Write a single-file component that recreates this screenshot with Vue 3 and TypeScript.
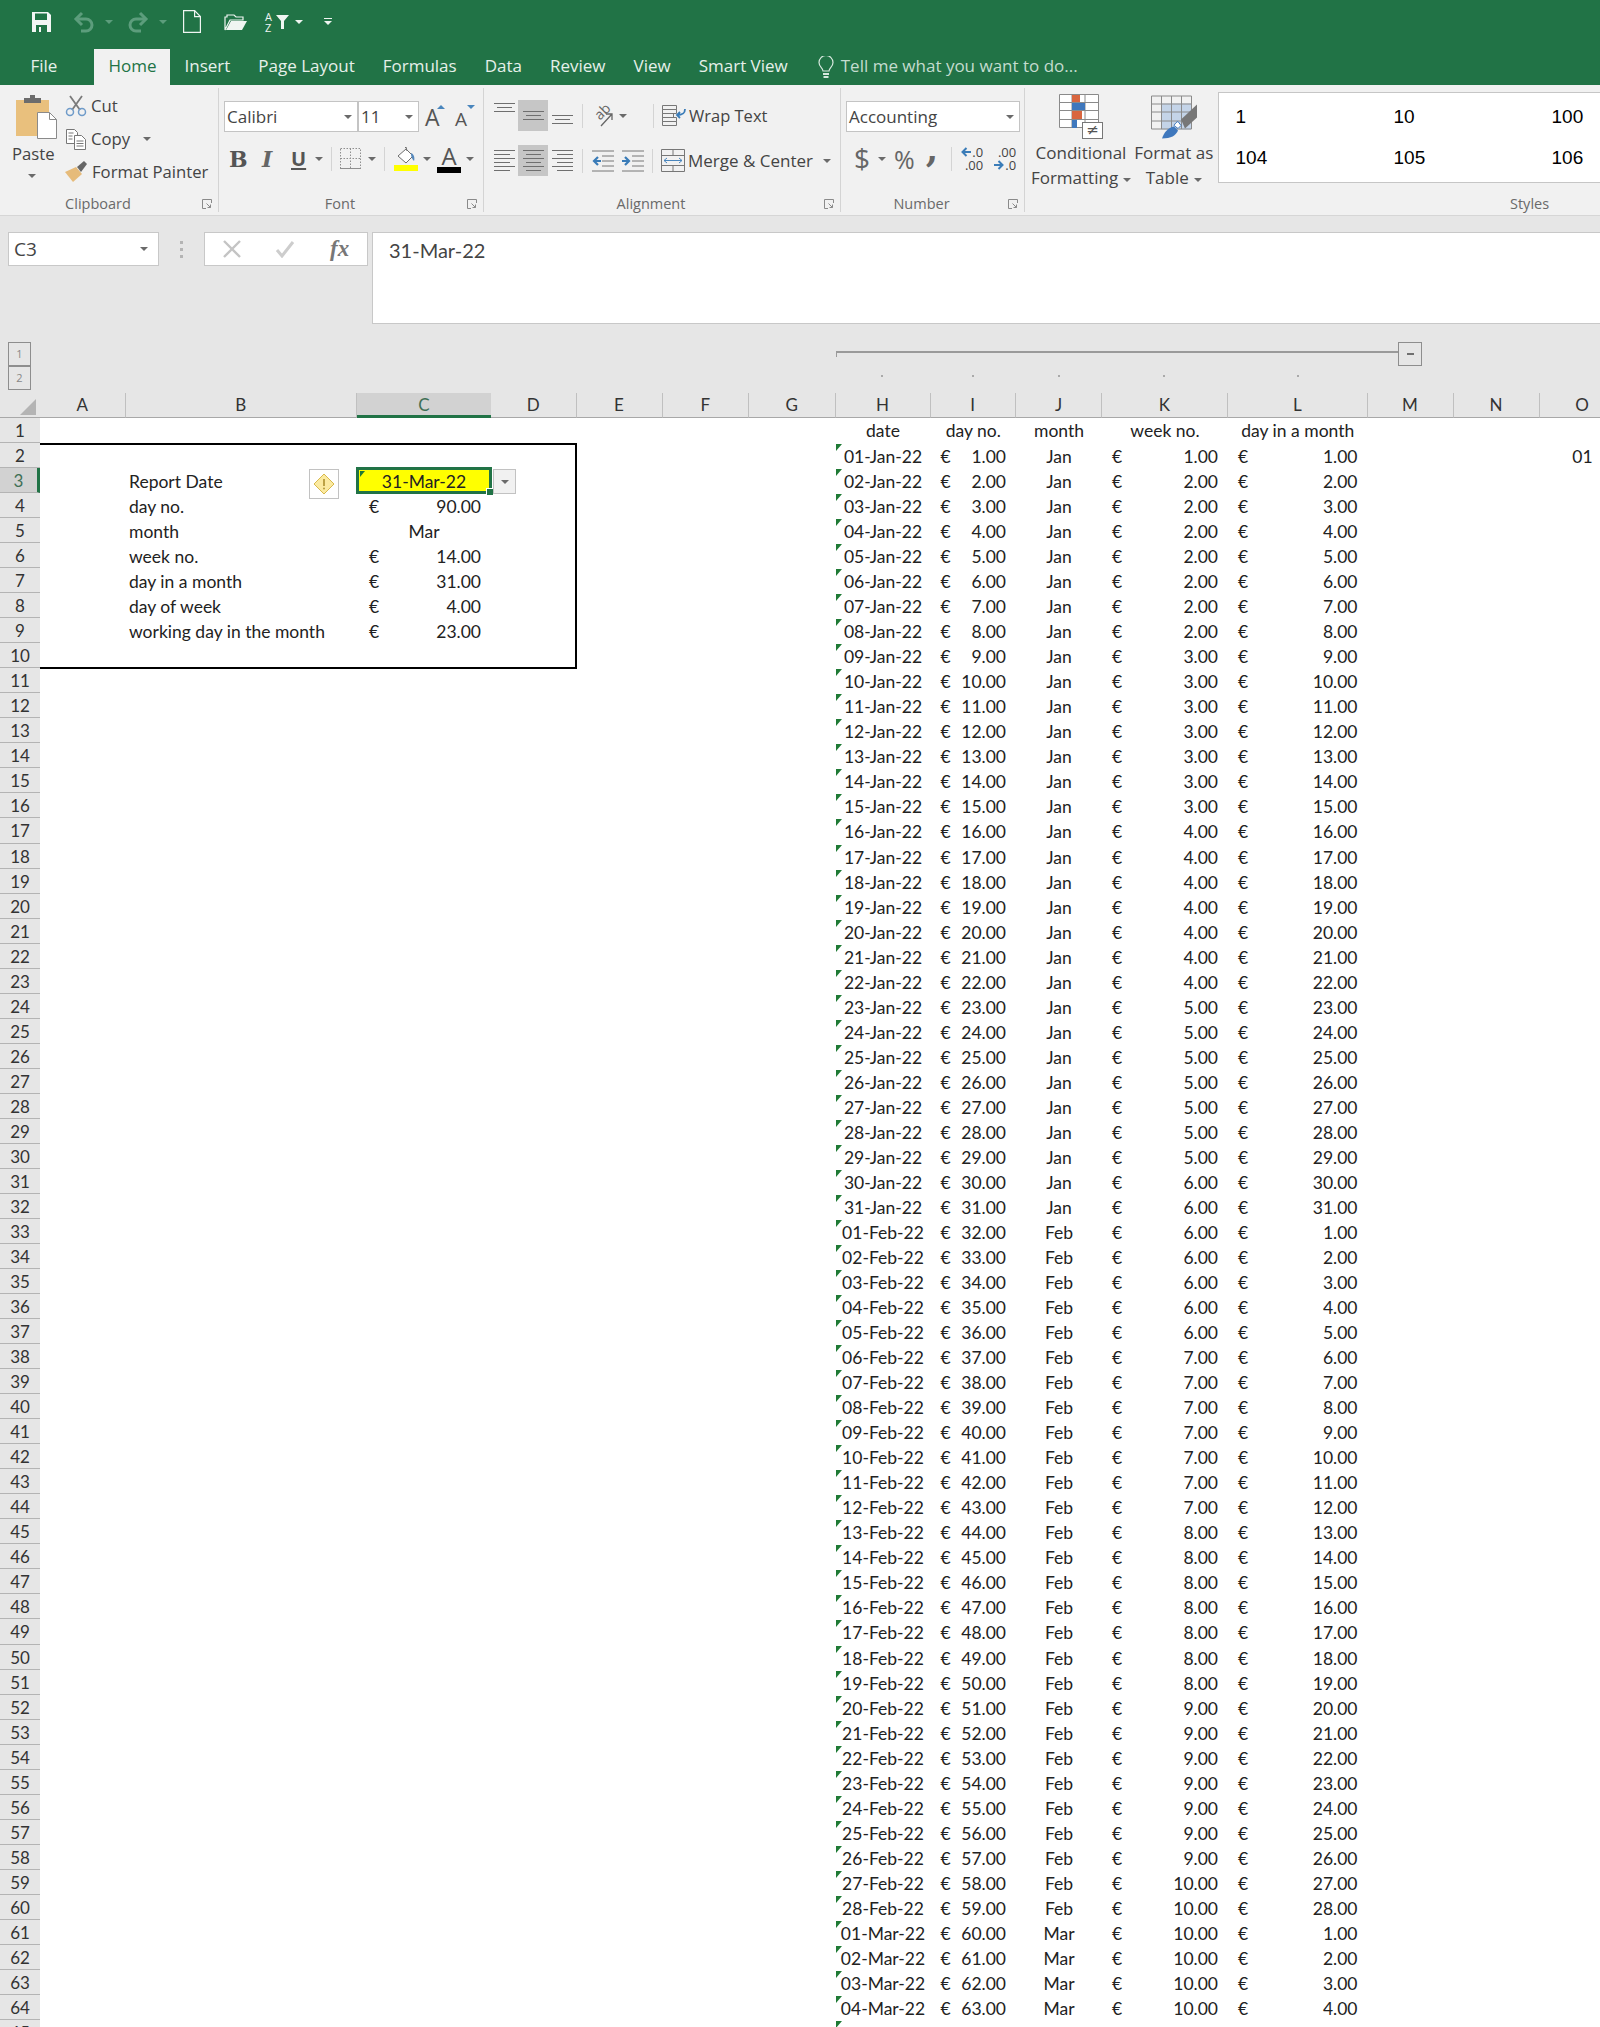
<template>
  <div class="app">
    <!-- title bar -->
    <div class="titlebar">
      <div class="qat">
        <svg class="q-save" width="19" height="20" viewBox="0 0 19 20"><path d="M0 0h16l3 3v17H0z" fill="#f3f6f4"/><rect x="3" y="1.500" width="12" height="6.500" fill="#217346"/><rect x="4" y="13" width="11" height="7" fill="#217346"/><rect x="7" y="15" width="2" height="5" fill="#f3f6f4"/></svg>
        <svg class="q-undo" width="22" height="22" viewBox="0 0 22 22" fill="none" stroke="#5c9d7c" stroke-width="3"><path d="M9 2 3 8l6 6"/><path d="M3 8h10a6 6 0 0 1 0 12H8"/></svg>
        <span class="q-caret dim"></span>
        <svg class="q-redo" width="22" height="22" viewBox="0 0 22 22" fill="none" stroke="#5c9d7c" stroke-width="3"><path d="m13 2 6 6-6 6"/><path d="M19 8H9a6 6 0 0 0 0 12h5"/></svg>
        <span class="q-caret dim"></span>
        <svg class="q-new" width="18" height="23" viewBox="0 0 18 23" fill="none" stroke="#f0f5f2" stroke-width="1.200"><path d="M.6.600h11l5.800 6v15.800H.6z"/><path d="M11.600.6v6h5.800"/></svg>
        <svg class="q-open" width="24" height="19" viewBox="0 0 24 19"><path d="M1 18V5h2V3h7l2 2h7v3H6L1 18z" fill="none" stroke="#f0f5f2" stroke-width="1.200"/><path d="M2 18 7 9h16l-5 9z" fill="#f0f5f2"/></svg>
        <div class="q-sort"><span>A</span><span>Z</span></div>
        <svg class="q-funnel" width="13" height="14" viewBox="0 0 13 14"><path d="M0 0h13L8 6v8H5V6z" fill="#f0f5f2"/></svg>
        <span class="q-caret"></span>
        <div class="q-custom"><i></i><span class="q-caret"></span></div>
      </div>
      <div class="tabs">
        <div v-for="t in tabs" :key="t" class="tab" :class="{ on: t === 'Home', file: t === 'File' }">{{ t }}</div>
        <svg class="bulb" width="16" height="22" viewBox="0 0 16 22" fill="none" stroke="#d7e8de" stroke-width="1.200"><path d="M5 15c0-3-4-4-4-8.500a7 7 0 0 1 14 0C15 11 11 12 11 15z"/><path d="M5 18h6M5.500 21h5" stroke-width="2"/></svg>
        <div class="tell">Tell me what you want to do...</div>
      </div>
    </div>

    <!-- ribbon -->
    <div class="ribbon">
      <section class="group g-clip">
        <div class="body clip-body">
          <div class="paste">
            <svg width="41" height="44" viewBox="0 0 41 44"><rect y="5" width="33" height="36" fill="#e9c07d"/><path d="M8 8V3h6V0h5v3h6v5z" fill="#6c6c6c"/><path d="M21.500 17.500h12l7 7v19h-19z" fill="#fff" stroke="#8a8a8a"/><path d="M33.500 17.500v7h7" fill="none" stroke="#8a8a8a"/></svg>
            <span class="paste-l">Paste</span>
            <span class="caret"></span>
          </div>
          <div class="clip-list">
            <div class="clip-row">
              <svg width="22" height="22" viewBox="0 0 22 22" fill="none"><path d="M5 1l10 14M17 1 7 15" stroke="#7a7a7a" stroke-width="1.800"/><circle cx="5" cy="17" r="3.500" stroke="#6f9bc9" stroke-width="1.500"/><circle cx="17" cy="17" r="3.500" stroke="#6f9bc9" stroke-width="1.500"/></svg>
              <span>Cut</span>
            </div>
            <div class="clip-row">
              <svg width="22" height="22" viewBox="0 0 22 22" fill="#fff" stroke="#777"><path d="M1.500 1.500h8l3 3v11h-11z"/><path d="M9.500 7.500h7l4 4v10h-11z"/><path d="M3.500 5h5M3.500 8h4M3.500 11h4M11.500 13h7M11.500 15.500h7M11.500 18h7" fill="none"/></svg>
              <span>Copy</span><span class="caret cp"></span>
            </div>
            <div class="clip-row">
              <svg width="23" height="22" viewBox="0 0 23 22"><path d="M0 11 11 6l6 7-9 8z" fill="#e6bb7a"/><path d="m12 6 7-6 3 3-6 8z" fill="#666"/></svg>
              <span>Format Painter</span>
            </div>
          </div>
        </div>
        <div class="label">Clipboard<svg class="launch" width="10" height="10" viewBox="0 0 10 10" fill="none" stroke="#8a8a8a"><path d="M9.500 4V.5H.5v9H4"/><path d="m4.500 4.500 4 4M8.500 5.500v3h-3"/></svg></div>
      </section>

      <section class="group g-font">
        <div class="body rows">
          <div class="r1">
            <div class="combo c-font">Calibri<span class="caret"></span></div>
            <div class="combo c-size">11<span class="caret"></span></div>
            <div class="grow"><span class="big-a">A</span><i class="tri-up"></i></div>
            <div class="shrink"><span class="small-a">A</span><i class="tri-dn"></i></div>
          </div>
          <div class="r2 font-tools">
            <span class="t-b">B</span>
            <span class="t-i">I</span>
            <span class="t-u">U</span><span class="caret"></span>
            <i class="vsep"></i>
            <svg width="21" height="21" viewBox="0 0 21 21" fill="none" stroke="#8f8f8f" stroke-dasharray="1.500 1.500"><path d="M.5.500h20v20H.5zM10.500.5v20M.5 10.500h20"/><path d="M0 20.500h21" stroke-dasharray="none"/></svg>
            <span class="caret"></span>
            <i class="vsep"></i>
            <div class="fill">
              <svg width="24" height="18" viewBox="0 0 24 18"><path d="m4 9 8-7 7 7-7 7z" fill="#fff" stroke="#6d6d6d"/><path d="M11 1l1-1 1 4" fill="none" stroke="#6d6d6d"/><path d="M17 6c3 1 4 5 3 8-2-2-3-4-3-8z" fill="#5588bb"/></svg>
              <i class="bar yellow"></i>
            </div>
            <span class="caret"></span>
            <div class="fcolor"><span>A</span><i class="bar black"></i></div>
            <span class="caret"></span>
          </div>
        </div>
        <div class="label">Font<svg class="launch" width="10" height="10" viewBox="0 0 10 10" fill="none" stroke="#8a8a8a"><path d="M9.500 4V.5H.5v9H4"/><path d="m4.500 4.500 4 4M8.500 5.500v3h-3"/></svg></div>
      </section>

      <section class="group g-align">
        <div class="body align-body">
          <div class="al-row">
            <div class="al-ic up"><svg width="21" height="12" viewBox="0 0 21 12" stroke="#6f6f6f"><path d="M0 1.500h21M3 5.500h15M0 9.500h21"/></svg></div>
            <div class="al-ic hi"><svg width="21" height="12" viewBox="0 0 21 12" stroke="#6f6f6f"><path d="M0 1.500h21M3 5.500h15M0 9.500h21"/></svg></div>
            <div class="al-ic low"><svg width="21" height="12" viewBox="0 0 21 12" stroke="#6f6f6f"><path d="M0 1.500h21M3 5.500h15M0 9.500h21"/></svg></div>
            <i class="vsep"></i>
            <svg class="orient" width="20" height="24" viewBox="0 0 20 24"><text x="1" y="13" transform="rotate(-45 8 9)" class="ab">ab</text><path d="M7 22 18 10M12 10h6v6" fill="none" stroke="#666" stroke-width="1.300"/></svg>
            <span class="caret"></span>
            <i class="vsep wide"></i>
            <svg class="wrap-i" width="24" height="22" viewBox="0 0 24 22" fill="none" stroke="#777"><path d="M.5.500h14v4H.5zM.5 4.500h14v4H.5zM.5 8.500h11v4H.5zM.5 12.500h14v4H.5zM.5 16.500h14v4H.5z"/><path d="M23 4c0 5-3 6-8 6m3-3-3 3 3 3" stroke="#3a7cb8" stroke-width="1.800"/></svg>
            <span class="al-text wrap-t">Wrap Text</span>
          </div>
          <div class="al-row">
            <div class="al-ic"><svg width="21" height="21" viewBox="0 0 21 21" stroke="#6f6f6f"><path d="M0 .5h21M0 4.500h16M0 8.500h21M0 12.500h16M0 16.500h21M0 20.500h16"/></svg></div>
            <div class="al-ic hi"><svg width="21" height="21" viewBox="0 0 21 21" stroke="#6f6f6f"><path d="M0 .5h21M3 4.500h15M0 8.500h21M3 12.500h15M0 16.500h21M3 20.500h15"/></svg></div>
            <div class="al-ic"><svg width="21" height="21" viewBox="0 0 21 21" stroke="#6f6f6f"><path d="M0 .5h21M5 4.500h16M0 8.500h21M5 12.500h16M0 16.500h21M5 20.500h16"/></svg></div>
            <i class="vsep"></i>
            <svg class="ind1" width="22" height="22" viewBox="0 0 22 22" fill="none"><path d="M0 1h22M10 6h12M10 11h12M10 16h12M0 21h22" stroke="#777"/><path d="M9 11H2m4-4-4 4 4 4" stroke="#3a7cb8" stroke-width="2.200"/></svg>
            <svg class="ind2" width="22" height="22" viewBox="0 0 22 22" fill="none"><path d="M0 1h22M10 6h12M10 11h12M10 16h12M0 21h22" stroke="#777"/><path d="M0 11h7M3 7l4 4-4 4" stroke="#3a7cb8" stroke-width="2.200"/></svg>
            <i class="vsep wide2"></i>
            <svg class="merge-i" width="24" height="23" viewBox="0 0 24 23" fill="none" stroke="#777"><path d="M.5.500h23v22H.5zM.5 6.500h23M.5 16.500h23M12 .5v6M12 16.500v6"/><path d="M3 11.500h18M6 9l-3 2.500L6 14M18 9l3 2.500-3 2.500" stroke="#4a86bd"/></svg>
            <span class="al-text merge-t">Merge &amp; Center</span>
            <span class="caret mc"></span>
          </div>
        </div>
        <div class="label">Alignment<svg class="launch" width="10" height="10" viewBox="0 0 10 10" fill="none" stroke="#8a8a8a"><path d="M9.500 4V.5H.5v9H4"/><path d="m4.500 4.500 4 4M8.500 5.500v3h-3"/></svg></div>
      </section>

      <section class="group g-num">
        <div class="body rows">
          <div class="r1"><div class="combo c-num">Accounting<span class="caret"></span></div></div>
          <div class="r2 num-tools">
            <span class="n-dollar">$</span><span class="caret"></span>
            <span class="n-pct">%</span>
            <span class="n-comma">,</span>
            <i class="vsep"></i>
            <div class="dec d1"><div><svg width="10" height="10" viewBox="0 0 10 10" fill="none" stroke="#3a7cb8" stroke-width="2"><path d="M10 5H2m3.500-4L1.500 5l4 4"/></svg><span>.0</span></div><div class="ra"><span>.00</span></div></div>
            <div class="dec d2"><div class="ra"><span>.00</span></div><div class="ra"><svg width="10" height="10" viewBox="0 0 10 10" fill="none" stroke="#3a7cb8" stroke-width="2"><path d="M0 5h8M4.500 1l4 4-4 4"/></svg><span>.0</span></div></div>
          </div>
        </div>
        <div class="label">Number<svg class="launch" width="10" height="10" viewBox="0 0 10 10" fill="none" stroke="#8a8a8a"><path d="M9.500 4V.5H.5v9H4"/><path d="m4.500 4.500 4 4M8.500 5.500v3h-3"/></svg></div>
      </section>

      <section class="group g-styles">
        <div class="body styles-body">
          <div class="bigbtn cond">
            <svg width="44" height="46" viewBox="0 0 44 46">
              <path d="M.5.500h39v33H.5zM.5 8.500h39M.5 16.500h39M.5 25.500h39M13 .5v33M26 .5v33" fill="#fff" stroke="#8a8a8a"/>
              <rect x="13" y="1" width="8" height="7" fill="#d9663f"/><rect x="13" y="9" width="13" height="7" fill="#3f78bd"/><rect x="13" y="17" width="10" height="8" fill="#d9663f"/><rect x="13" y="26" width="5" height="8" fill="#3f78bd"/>
              <rect x="23.500" y="28.500" width="20" height="16" fill="#fff" stroke="#777"/><text x="33.500" y="41" text-anchor="middle" class="ne">≠</text>
            </svg>
            <span>Conditional</span>
            <span>Formatting<i class="caret"></i></span>
          </div>
          <div class="bigbtn fmt">
            <svg width="46" height="43" viewBox="0 0 46 43">
              <rect x="10" y="8" width="30" height="26" fill="#c4d4e8"/>
              <path d="M.5.500h40v33H.5zM.5 8.500h40M.5 16.500h40M.5 25.500h40M10.500.5v33M20.500.5v33M30.500.5v33" fill="none" stroke="#8a8a8a"/>
              <path d="M11 43c2-6 6-11 12-12l4 4c-2 5-7 8-16 8z" fill="#3f78bd"/><path d="M23 30c1-2 3-4 4-4l3 4-3 3z" fill="#fff" stroke="#3f78bd"/>
              <path d="m30 24 16-15v13L34 33z" fill="#777"/>
            </svg>
            <span>Format as</span>
            <span>Table<i class="caret"></i></span>
          </div>
          <div class="gallery">
            <span v-for="g in gallery" :key="g">{{ g }}</span>
          </div>
        </div>
        <div class="label styles-l">Styles</div>
      </section>
    </div>

    <!-- formula bar area -->
    <div class="formula-area">
      <div class="fx-line">
        <div class="namebox">C3<span class="caret"></span></div>
        <div class="grip"><i></i><i></i><i></i></div>
        <div class="fxbtns">
          <svg width="18" height="18" viewBox="0 0 18 18" stroke="#c4c4c4" stroke-width="2.400"><path d="m1 1 16 16M17 1 1 17"/></svg>
          <svg width="20" height="18" viewBox="0 0 20 18" fill="none" stroke="#cdcdcd" stroke-width="3"><path d="m2 10 5 6L18 2"/></svg>
          <span class="fx">fx</span>
        </div>
        <div class="finput">31-Mar-22</div>
      </div>
      <div class="outline-row">
        <div class="outline-levels"><div>1</div><div>2</div></div>
        <div class="outline-track">
          <div class="o-line"></div>
          <div class="o-btn"><i></i></div>
        </div>
      </div>
      <div class="dots"><i></i><i></i><i></i><i></i><i></i></div>
    </div>

    <!-- sheet -->
    <div class="sheet">
      <div class="corner"><i></i></div>
      <div v-for="c in columns" :key="c" class="ch" :class="{ active: c === 'C' }">{{ c }}</div>
      <template v-for="row in rows" :key="row.n">
        <div class="rh" :class="{ active: row.n === 3 }">{{ row.n }}</div>
        <div v-for="(cell, i) in row.cells" :key="i" class="cell" :class="cell.cls">
          <span v-if="cell.euro">€</span><span>{{ cell.text }}</span>
        </div>
      </template>
      <div class="frame"></div>
      <div class="warn">
        <svg width="22" height="22" viewBox="0 0 22 22"><path d="M11 1 21 11 11 21 1 11z" fill="#fbeaa0" stroke="#d8b94c"/><path d="M11 6v7" stroke="#b59a3a" stroke-width="1.800"/><circle cx="11" cy="15.500" r="1" fill="#b59a3a"/></svg>
      </div>
      <div class="drop"><span class="caret"></span></div>
    </div>
  </div>
</template>

<script setup lang="ts">
interface Cell {
  text: string
  cls: string
  euro?: boolean
}

interface Row {
  n: number
  cells: Cell[]
}

const tabs = ['File', 'Home', 'Insert', 'Page Layout', 'Formulas', 'Data', 'Review', 'View', 'Smart View']
const gallery = ['1', '10', '100', '104', '105', '106']
const columns = 'ABCDEFGHIJKLMNO'.split('')

const months = [
  { name: 'Jan', days: 31 },
  { name: 'Feb', days: 28 },
  { name: 'Mar', days: 31 },
]

// one entry per day from 1 Jan, as in columns H to L
const days: { date: string; no: number; month: string; week: number; dom: number }[] = []
months.forEach((m) => {
  for (let d = 1; d <= m.days; d++) {
    const no = days.length + 1
    days.push({
      date: `${String(d).padStart(2, '0')}-${m.name}-22`,
      no,
      month: m.name,
      week: Math.ceil((no - 1) / 7) + 1,
      dom: d,
    })
  }
})

const report: Record<number, [string, Cell]> = {
  3: ['Report Date', { text: '31-Mar-22', cls: 'ctr sel' }],
  4: ['day no.', { text: '90.00', cls: 'acct c', euro: true }],
  5: ['month', { text: 'Mar', cls: 'ctr' }],
  6: ['week no.', { text: '14.00', cls: 'acct c', euro: true }],
  7: ['day in a month', { text: '31.00', cls: 'acct c', euro: true }],
  8: ['day of week', { text: '4.00', cls: 'acct c', euro: true }],
  9: ['working day in the month', { text: '23.00', cls: 'acct c', euro: true }],
}

const blank = (): Cell => ({ text: '', cls: '' })
const money = (v: number, cls: string): Cell => ({ text: v.toFixed(2), cls: `acct ${cls}`, euro: true })

const buildRow = (n: number): Row => {
  const r = report[n]
  const cells: Cell[] = [blank(), r ? { text: r[0], cls: 'lbl' } : blank(), r ? r[1] : blank(), blank(), blank(), blank(), blank()]
  if (n === 1) {
    ;['date', 'day no.', 'month', 'week no.', 'day in a month'].forEach((t) => cells.push({ text: t, cls: 'ctr hd' }))
  } else if (n === 65) {
    cells.push({ text: '', cls: 'note' }, blank(), blank(), blank(), blank())
  } else {
    const d = days[n - 2]
    cells.push(
      { text: d.date, cls: 'ctr note' },
      money(d.no, 'i'),
      { text: d.month, cls: 'ctr' },
      money(d.week, 'k'),
      money(d.dom, 'l'),
    )
  }
  cells.push(blank(), blank(), n === 2 ? { text: '01', cls: 'ctr' } : blank())
  return { n, cells }
}

const rows: Row[] = Array.from({ length: 65 }, (_, i) => buildRow(i + 1))
</script>

<style>
html,
body {
  margin: 0;
  background: #fff;
}
</style>

<style scoped>
.app {
  width: 1600px;
  height: 2027px;
  overflow: hidden;
  background: #fff;
  font-family: "Open Sans", "Noto Sans", sans-serif;
  color: #444;
}

i {
  display: block;
}

.caret {
  display: inline-block;
  width: 0;
  height: 0;
  border-left: 4px solid transparent;
  border-right: 4px solid transparent;
  border-top: 4px solid #6a6a6a;
  flex: none;
}

/* title bar */
.titlebar {
  height: 85px;
  background: #217346;
}

.qat {
  height: 49px;
  display: flex;
  align-items: center;
  padding-left: 32px;
  box-sizing: border-box;
  padding-bottom: 6px;
}

.q-caret {
  width: 0;
  height: 0;
  border-left: 4px solid transparent;
  border-right: 4px solid transparent;
  border-top: 4px solid #eef4f0;
}

.q-caret.dim {
  border-top-color: #5c9d7c;
  margin-left: 10px;
}

.q-undo {
  margin-left: 22px;
}

.q-redo {
  margin-left: 14px;
}

.q-new {
  margin-left: 16px;
}

.q-open {
  margin-left: 23px;
}

.q-sort {
  margin-left: 17px;
  display: flex;
  flex-direction: column;
  font-size: 11px;
  line-height: 11px;
  color: #f0f5f2;
  width: 11px;
}

.q-funnel {
  margin-right: 6px;
}

.q-custom {
  margin-left: 21px;
  display: flex;
  flex-direction: column;
  gap: 2px;
  width: 8px;
}

.q-custom i {
  height: 1px;
  background: #eef4f0;
}

.tabs {
  height: 36px;
  display: flex;
  align-items: stretch;
  padding-left: 16.500px;
  color: #e6f0ea;
  font-size: 17px;
}

.tab {
  padding: 0 14px;
  line-height: 34px;
}

.tab.file {
  margin-right: 23px;
}

.tab.on {
  background: #f1f1f1;
  color: #217346;
}

.bulb {
  align-self: center;
  margin-left: 16px;
}

.tell {
  line-height: 34px;
  margin-left: 7px;
  color: #c4dccf;
}

/* ribbon */
.ribbon {
  height: 130px;
  box-sizing: content-box;
  display: flex;
  background: #f1f1f1;
  border-bottom: 1px solid #d6d6d6;
  font-size: 16.700px;
}

.group {
  box-sizing: border-box;
  margin: 3px 0 4px;
  height: 124px;
  display: flex;
  flex-direction: column;
  flex: none;
  border-right: 1px solid #d4d4d4;
}

.body {
  flex: 1;
  min-height: 0;
}

.label {
  position: relative;
  box-sizing: border-box;
  height: 24px;
  line-height: 32px;
  padding-right: 22px;
  text-align: center;
  font-size: 14.500px;
  color: #6a6a6a;
  flex: none;
}

.launch {
  position: absolute;
  right: 6px;
  top: 11px;
}

.g-clip {
  width: 219px;
}

.clip-body {
  display: flex;
  padding: 1.500px 0 0 12px;
}

.paste {
  width: 53px;
  display: flex;
  flex-direction: column;
  align-items: flex-start;
}

.paste svg {
  margin: 5.500px 0 0 4px;
}

.paste-l {
  line-height: 24px;
  margin-top: 3px;
  width: 41px;
  text-align: center;
}

.paste .caret {
  margin: 8px 0 0 16px;
}

.clip-list {
  display: flex;
  flex-direction: column;
}

.clip-row {
  height: 33px;
  display: flex;
  align-items: center;
  gap: 4px;
  white-space: nowrap;
}

.cp {
  margin-left: 9px;
}

.g-font {
  width: 265px;
}

.rows {
  padding: 13px 0 0 5px;
}

.r1,
.r2 {
  height: 31px;
  display: flex;
  align-items: center;
}

.r2 {
  margin-top: 11px;
}

.combo {
  height: 31px;
  box-sizing: border-box;
  background: #fff;
  border: 1px solid #c4c4c4;
  display: flex;
  align-items: center;
  justify-content: space-between;
  padding: 0 5px 0 2px;
  font-size: 17px;
}

.c-font {
  width: 134px;
}

.c-size {
  width: 61px;
}

.grow,
.shrink {
  position: relative;
  display: flex;
  align-items: center;
  height: 31px;
}

.grow {
  margin-left: 6px;
  width: 30px;
}

.shrink {
  width: 24px;
}

.big-a {
  font-size: 23px;
  color: #555;
}

.small-a {
  font-size: 19px;
  color: #555;
  margin-top: 4px;
}

.tri-up,
.tri-dn {
  position: absolute;
  top: 4px;
  width: 0;
  height: 0;
  border-left: 4px solid transparent;
  border-right: 4px solid transparent;
}

.tri-up {
  left: 12px;
  border-bottom: 4px solid #4a86bd;
}

.tri-dn {
  left: 12px;
  border-top: 4px solid #4a86bd;
}

.font-tools {
  padding-left: 5px;
}

.t-b {
  font: 700 22px "DejaVu Serif", serif;
  color: #555;
  width: 16px;
}

.t-i {
  font: italic 700 22px "DejaVu Serif", serif;
  color: #666;
  margin-left: 17px;
  width: 13px;
}

.t-u {
  font: 700 20px "Open Sans", sans-serif;
  color: #555;
  margin-left: 16px;
  text-decoration: underline;
  text-underline-offset: 2px;
}

.t-u + .caret {
  margin-left: 9px;
}

.vsep {
  width: 1px;
  height: 24px;
  background: #d4d4d4;
  margin: 0 8px;
}

.font-tools svg + .caret {
  margin-left: 7px;
}

.fill {
  display: flex;
  flex-direction: column;
  margin-left: 1px;
}

.bar {
  width: 24px;
  height: 6px;
}

.bar.yellow {
  background: #ffff00;
}

.bar.black {
  background: #000;
}

.fill + .caret {
  margin-left: 5px;
}

.fcolor {
  margin-left: 6px;
  display: flex;
  flex-direction: column;
  align-items: center;
}

.fcolor span {
  font-size: 24px;
  line-height: 22px;
  color: #555;
}

.fcolor + .caret {
  margin-left: 5px;
}

/* alignment */
.g-align {
  width: 357px;
}

.align-body {
  padding: 12px 0 0 10px;
  display: flex;
  flex-direction: column;
  gap: 14px;
}

.al-row {
  height: 31px;
  display: flex;
  align-items: center;
  white-space: nowrap;
}

.al-ic {
  width: 30px;
  height: 31px;
  display: flex;
  align-items: center;
  justify-content: center;
}

.al-ic.up svg {
  margin-bottom: 15px;
}

.al-ic.low svg {
  margin-top: 9px;
}

.al-ic.hi {
  background: #c6c6c6;
}

.al-row .al-ic:first-child {
  width: 21px;
  justify-content: flex-start;
  margin-right: 3px;
}

.al-row .al-ic:nth-child(3) {
  width: 34px;
  justify-content: flex-start;
  padding-left: 4px;
  box-sizing: border-box;
}

.al-row > .vsep {
  margin: 0 6px 0 0;
}

.orient {
  margin-left: 5px;
  overflow: visible;
}

.orient + .caret {
  margin-left: 5px;
}

.ab {
  font: 14px "Open Sans", sans-serif;
  fill: #666;
}

.ne {
  font: 15px "DejaVu Sans", sans-serif;
  fill: #555;
}

.al-row > .vsep.wide {
  margin-left: 26px;
  margin-right: 0;
}

.wrap-i {
  margin-left: 8px;
}

.al-text {
  font-size: 17px;
}

.wrap-t {
  margin-left: 3px;
  font-size: 16.500px;
}

.ind1 {
  margin-left: 3px;
}

.ind2 {
  margin-left: 8px;
}

.al-row > .vsep.wide2 {
  margin: 0 0 0 8px;
}

.merge-i {
  margin-left: 8px;
}

.merge-t {
  margin-left: 3px;
}

.mc {
  margin-left: 10px;
}

/* number */
.g-num {
  width: 184px;
}

.c-num {
  width: 174px;
}

.num-tools {
  padding-left: 8px;
}

.n-dollar {
  font-size: 28px;
  width: 21px;
  line-height: 31px;
  color: #666;
}

.n-dollar + .caret {
  margin-left: 3px;
}

.n-pct {
  font-size: 25px;
  margin-left: 8px;
  color: #666;
}

.n-comma {
  font: 700 36px "DejaVu Serif", serif;
  margin: -20px 0 0 11px;
  color: #666;
}

.num-tools .vsep {
  margin: 0 0 0 13px;
}

.dec {
  font-size: 13px;
  line-height: 13px;
  width: 22px;
}

.dec > div {
  display: flex;
  align-items: center;
  gap: 1px;
}

.dec .ra {
  justify-content: flex-end;
}

.d1 {
  margin-left: 9px;
}

.d2 {
  margin-left: 11px;
}

/* styles */
.g-styles {
  flex: 1;
  min-width: 0;
  border-right: 0;
}

.styles-body {
  display: flex;
  padding-left: 7px;
}

.bigbtn {
  display: flex;
  flex-direction: column;
  align-items: center;
  padding-top: 6px;
  font-size: 17px;
  line-height: 25px;
  white-space: nowrap;
  position: relative;
  flex: none;
}

.bigbtn svg {
  flex: none;
  height: 46px;
}

.bigbtn .caret {
  display: inline-block;
  margin-left: 5px;
  vertical-align: 2px;
}

.cond {
  width: 98px;
}

.fmt {
  width: 87.500px;
}

.gallery {
  box-sizing: border-box;
  height: 91px;
  margin-top: 4px;
  flex: 1;
  min-width: 0;
  background: #fff;
  border: 1px solid #c6c6c6;
  border-right: 0;
  display: grid;
  grid-template-columns: repeat(3, 158px);
  grid-auto-rows: 40.500px;
  padding: 4px 0 0 17px;
  font: 19px/40px "Liberation Sans", sans-serif;
  color: #000;
}

.styles-l {
  text-align: left;
  padding: 0 0 0 485px;
  color: #6a6a6a;
}

/* formula bar */
.formula-area {
  height: 177px;
  background: #e6e6e6;
  position: relative;
}

.fx-line {
  display: flex;
  align-items: flex-start;
  padding: 16px 0 0 8px;
  height: 108px;
  box-sizing: border-box;
}

.namebox {
  box-sizing: border-box;
  width: 151px;
  height: 34px;
  background: #fff;
  border: 1px solid #c8c8c8;
  display: flex;
  align-items: center;
  justify-content: space-between;
  padding: 0 10px 0 5px;
  font-size: 19px;
}

.grip {
  width: 45px;
  height: 34px;
  display: flex;
  flex-direction: column;
  align-items: center;
  justify-content: center;
  gap: 4px;
}

.grip i {
  width: 3px;
  height: 3px;
  background: #b4b4b4;
}

.fxbtns {
  box-sizing: border-box;
  width: 164px;
  height: 34px;
  background: #fff;
  border: 1px solid #c8c8c8;
  display: flex;
  align-items: center;
  padding-left: 18px;
  gap: 34px;
}

.fx {
  font: italic 700 23px "Liberation Serif", serif;
  color: #777;
  margin-left: 1px;
}

.finput {
  box-sizing: border-box;
  flex: 1;
  height: 92px;
  margin-left: 4px;
  background: #fff;
  border: 1px solid #c8c8c8;
  border-right: 0;
  padding-left: 16px;
  font: 20px/34px Lato, "Liberation Sans", sans-serif;
  color: #444;
}

.outline-row {
  display: flex;
  height: 48px;
  margin-top: 18px;
  padding-left: 8px;
}

.outline-levels {
  width: 23px;
}

.outline-levels div {
  box-sizing: border-box;
  height: 24px;
  border: 1px solid #8e8e8e;
  text-align: center;
  font: 11px/22px "Open Sans", sans-serif;
  color: #888;
}

.outline-track {
  flex: none;
  display: flex;
  align-items: flex-start;
  margin-left: 805px;
}

.o-line {
  width: 561px;
  height: 2px;
  margin-top: 9px;
  background: #9a9a9a;
  border-left: 1px solid #9a9a9a;
  position: relative;
}

.o-line::before {
  content: "";
  position: absolute;
  left: -1px;
  top: 0;
  width: 1px;
  height: 6px;
  background: #9a9a9a;
}

.o-btn {
  box-sizing: border-box;
  width: 24px;
  height: 24px;
  border: 1px solid #8e8e8e;
  display: flex;
  align-items: center;
  justify-content: center;
}

.o-btn i {
  width: 7px;
  height: 2px;
  background: #707070;
}

.dots {
  position: absolute;
  top: 159px;
  left: 0;
  right: 0;
  height: 2px;
}

.dots i {
  position: absolute;
  width: 2px;
  height: 2px;
  background: #aaa;
}

.dots i:nth-child(1) { left: 881px; }
.dots i:nth-child(2) { left: 972px; }
.dots i:nth-child(3) { left: 1058px; }
.dots i:nth-child(4) { left: 1163px; }
.dots i:nth-child(5) { left: 1297px; }

/* sheet */
.sheet {
  position: relative;
  display: grid;
  grid-template-columns: 40px 85.500px 231.500px 134px 85.500px 86px 86.500px 86.500px 95px 85.500px 86px 126px 139.500px 86px 86px 86px;
  grid-template-rows: 24.500px 25.500px;
  grid-auto-rows: 25.045px;
  font: 17.500px Lato, "Liberation Sans", sans-serif;
  color: #222;
}

.corner {
  background: #e6e6e6;
  border-bottom: 1px solid #a8a8a8;
  position: relative;
}

.corner i {
  position: absolute;
  right: 4px;
  bottom: 2px;
  width: 0;
  height: 0;
  border-bottom: 16px solid #b4b4b4;
  border-left: 16px solid transparent;
}

.ch {
  background: #e6e6e6;
  box-sizing: border-box;
  border-bottom: 1px solid #a8a8a8;
  border-right: 1px solid #c0c0c0;
  text-align: center;
  line-height: 24px;
  font-size: 17px;
  color: #333;
}

.ch.active {
  background: #d2d2d2;
  border-bottom: 3px solid #217346;
  border-right: 0;
  color: #3f6f55;
}

.rh {
  background: #e6e6e6;
  box-sizing: border-box;
  border-bottom: 1px solid #b4b4b4;
  text-align: center;
  line-height: 26px;
  font-size: 17px;
  color: #333;
}

.rh.active {
  background: #d2d2d2;
  border-right: 3px solid #217346;
  color: #3f6f55;
}

.cell {
  position: relative;
  box-sizing: border-box;
  min-width: 0;
  line-height: 27px;
  white-space: nowrap;
}

.hd {
  line-height: 25px;
}

.ctr {
  text-align: center;
}

.lbl {
  padding-left: 3.500px;
}

.acct {
  display: flex;
  justify-content: space-between;
  padding: 0 10px;
}

.acct.c {
  padding-left: 12px;
}

.note::before,
.sel::before {
  content: "";
  position: absolute;
  left: 0;
  top: 1px;
  border-top: 7px solid #1f7a35;
  border-right: 6px solid transparent;
}

.sel {
  background: #ffff00;
  box-shadow: 0 0 0 1px #217346, inset 0 0 0 2px #217346;
}

.sel::before {
  left: 3px;
  top: 3px;
  border-top-width: 6px;
  border-right-width: 5px;
}

.sel::after {
  content: "";
  position: absolute;
  right: -2px;
  bottom: -2px;
  width: 6px;
  height: 6px;
  background: #217346;
  border: 1px solid #fff;
  border-width: 1px 0 0 1px;
}

.frame {
  position: absolute;
  inset: 0 0 -1px 0;
  grid-row: 3 / 12;
  grid-column: 2 / 6;
  border: 2.500px solid #000;
  border-left: 0;
  pointer-events: none;
}

.warn {
  position: absolute;
  left: 309px;
  top: 76px;
  box-sizing: border-box;
  width: 30px;
  height: 30px;
  background: #fff;
  border: 1px solid #c2c2c2;
  display: flex;
  align-items: center;
  justify-content: center;
}

.drop {
  position: absolute;
  left: 493px;
  top: 76px;
  box-sizing: border-box;
  width: 23px;
  height: 25px;
  background: #f1f1f1;
  border: 1px solid #c2c2c2;
  display: flex;
  align-items: center;
  justify-content: center;
}
</style>
